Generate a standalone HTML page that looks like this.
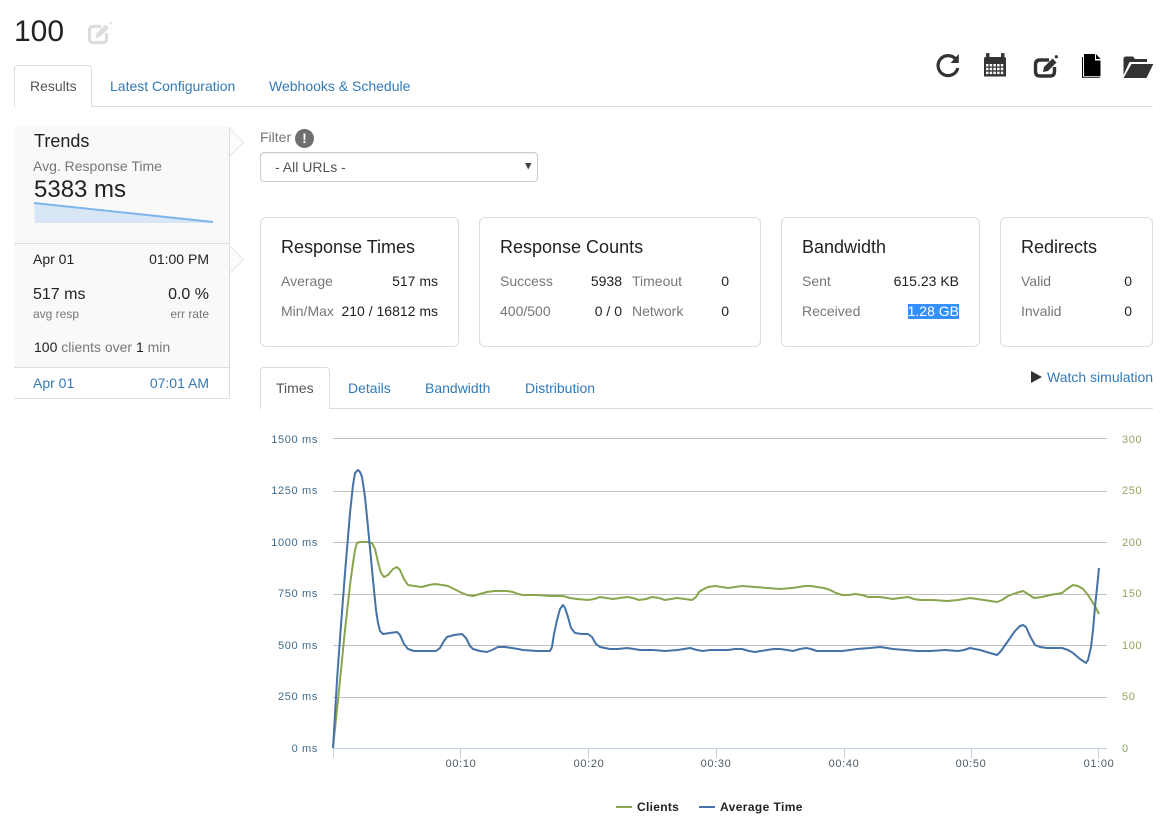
<!DOCTYPE html>
<html><head><meta charset="utf-8"><style>
html,body{margin:0;padding:0;background:#fff;width:1167px;height:836px;overflow:hidden}
body{position:relative;font-family:"Liberation Sans",Arial,sans-serif;font-size:14px;color:#333}
.t{position:absolute;white-space:nowrap;line-height:20px}
.g{color:#777}.a{color:#337ab7}.d{color:#222}
.b{position:absolute;box-sizing:border-box}
.card{position:absolute;box-sizing:border-box;top:217px;height:130px;border:1px solid #ddd;border-radius:6px;background:#fff}
.h{font-size:18px;color:#222;top:237px}
.r1{top:271px}.r2{top:301px}
.l{font-size:11px;text-align:right;width:60px;left:258px;color:#3f6a8a;letter-spacing:.65px}
.rr{font-size:11px;left:1122px;color:#8fa45e;letter-spacing:.65px}
.x{font-size:11px;width:60px;text-align:center;top:754px;color:#4b5a66;letter-spacing:.65px}
</style></head><body>
<div class="t" style="left:14px;top:16px;font-size:30px;line-height:32px;color:#222">100</div>

<div class="b" style="left:14px;top:106px;width:1139px;height:1px;background:#ddd"></div>
<div class="b" style="left:14px;top:65px;width:78px;height:42px;border:1px solid #ddd;border-bottom:0;border-radius:4px 4px 0 0;background:#fff"></div>
<div class="t" style="left:30px;top:76px;color:#555">Results</div>
<div class="t a" style="left:110px;top:76px">Latest Configuration</div>
<div class="t a" style="left:269px;top:76px">Webhooks &amp; Schedule</div>

<svg class="b" style="left:0;top:0" width="1167" height="100" viewBox="0 0 1167 100">
<!-- title edit -->
<path d="M101 26.500H93Q89.500 26.500 89.500 30V39Q89.500 42.500 93 42.500H103Q106.500 42.500 106.500 39V33" fill="none" stroke="#ddd" stroke-width="3.200"/>
<path d="M95.500 38L96.500 33.500L105.500 24.500L109 28L100 37Z" fill="#ddd"/><circle cx="110.500" cy="23" r="1.300" fill="#ddd"/>
<!-- refresh -->
<path d="M956 59.500A10 10 0 1 0 957.800 68" fill="none" stroke="#333" stroke-width="3.200"/>
<path d="M958.800 54V63H950.500Z" fill="#333"/>
<!-- calendar -->
<path d="M986 57H1004Q1006 57 1006 59V76.500H984V59Q984 57 986 57Z" fill="#333"/>
<rect x="986" y="53" width="3.500" height="5" rx="1" fill="#333"/><rect x="1001" y="53" width="3.500" height="5" rx="1" fill="#333"/>
<path d="M986 64h2.500v2.500h-2.500zM989.700 64h2.500v2.500h-2.500zM993.400 64h2.500v2.500h-2.500zM997.100 64h2.500v2.500h-2.500zM1000.800 64h2.500v2.500h-2.500zM986 67.800h2.500v2.500h-2.500zM989.700 67.800h2.500v2.500h-2.500zM993.400 67.800h2.500v2.500h-2.500zM997.100 67.800h2.500v2.500h-2.500zM1000.800 67.800h2.500v2.500h-2.500zM986 71.600h2.500v2.500h-2.500zM989.700 71.600h2.500v2.500h-2.500zM993.400 71.600h2.500v2.500h-2.500zM997.100 71.600h2.500v2.500h-2.500zM1000.800 71.600h2.500v2.500h-2.500z" fill="#fff"/>
<!-- edit -->
<path d="M1049 60H1040Q1035.500 60 1035.500 64.500V71.500Q1035.500 76 1040 76H1050Q1054.500 76 1054.500 71.500V67" fill="none" stroke="#333" stroke-width="3.400"/>
<path d="M1043 72L1044 67L1052.500 58.500L1056.500 62.500L1048 71Z" fill="#333"/><circle cx="1056.300" cy="56.700" r="1.600" fill="#333"/>
<!-- file -->
<path d="M1084 54H1095V60.500H1100.500V76H1084Z" fill="#000"/><path d="M1096 54L1100.500 59H1096Z" fill="#000"/>
<path d="M1082.500 57V77.300H1100" fill="none" stroke="#000" stroke-width="1"/>
<!-- folder -->
<path d="M1123.500 75V59Q1123.500 56.500 1126 56.500H1133L1135 59H1147V62H1129.500Z" fill="#333"/>
<path d="M1131.500 64H1153.300L1146.500 78H1123.500Z" fill="#333"/>
</svg>

<div class="b" style="left:14px;top:127px;width:216px;height:240px;background:#f9f9f9"></div>
<div class="b" style="left:229px;top:127px;width:1px;height:272px;background:#ddd"></div>
<div class="b" style="left:14px;top:243px;width:216px;height:1px;background:#ddd"></div>
<div class="b" style="left:14px;top:367px;width:216px;height:1px;background:#ddd"></div>
<div class="b" style="left:14px;top:398px;width:216px;height:1px;background:#ddd"></div>
<svg class="b" style="left:230px;top:128px" width="16" height="30"><path d="M0 1L13.500 14.500L0 28" fill="#fcfcfc" stroke="#e6e6e6"/></svg>
<svg class="b" style="left:230px;top:245px" width="16" height="30"><path d="M0 1L13.500 14.500L0 28" fill="#fcfcfc" stroke="#e6e6e6"/></svg>
<div class="t" style="left:34px;top:131px;font-size:18px;color:#222">Trends</div>
<div class="t g" style="left:33px;top:156px">Avg. Response Time</div>
<div class="t" style="left:34px;top:180px;font-size:24px;color:#222">5383 ms</div>
<svg class="b" style="left:30px;top:198px" width="190" height="30"><path d="M4.500 5L183 24V25H4.500Z" fill="#d8e6f6"/><path d="M4 5L183 24" fill="none" stroke="#7cb5ec" stroke-width="2"/></svg>
<div class="t d" style="left:33px;top:249px">Apr 01</div>
<div class="t d" style="right:958px;top:249px">01:00 PM</div>
<div class="t d" style="left:33px;top:285px;font-size:16px">517 ms</div>
<div class="t d" style="right:958px;top:285px;font-size:16px">0.0 %</div>
<div class="t g" style="left:33px;top:304px;font-size:12px">avg resp</div>
<div class="t g" style="right:958px;top:304px;font-size:12px">err rate</div>
<div class="t g" style="left:34px;top:337px"><span class="d">100</span> clients over <span class="d">1</span> min</div>
<div class="t a" style="left:33px;top:373px">Apr 01</div>
<div class="t a" style="right:958px;top:373px">07:01 AM</div>

<div class="t g" style="left:260px;top:127px">Filter</div>
<div class="b" style="left:295px;top:129px;width:19px;height:19px;border-radius:50%;background:#6f6f6f;color:#fff;font-weight:bold;font-size:14px;line-height:19px;text-align:center">!</div>
<div class="b" style="left:260px;top:152px;width:278px;height:30px;border:1px solid #ccc;border-radius:4px;box-shadow:inset 0 1px 1px rgba(0,0,0,.075)"></div>
<div class="t" style="left:275px;top:157px;color:#555">- All URLs -</div>
<svg class="b" style="left:525px;top:163px" width="7" height="7"><path d="M0 0H6.500L3.250 6.500Z" fill="#444"/></svg>

<div class="card" style="left:260px;width:199px"></div>
<div class="card" style="left:479px;width:282px"></div>
<div class="card" style="left:781px;width:199px"></div>
<div class="card" style="left:1000px;width:153px"></div>
<div class="t h" style="left:281px">Response Times</div>
<div class="t g r1" style="left:281px">Average</div><div class="t d r1" style="right:729px">517 ms</div>
<div class="t g r2" style="left:281px">Min/Max</div><div class="t d r2" style="right:729px">210 / 16812 ms</div>
<div class="t h" style="left:500px">Response Counts</div>
<div class="t g r1" style="left:500px">Success</div><div class="t d r1" style="right:545px">5938</div>
<div class="t g r1" style="left:632px">Timeout</div><div class="t d r1" style="right:438px">0</div>
<div class="t g r2" style="left:500px">400/500</div><div class="t d r2" style="right:545px">0 / 0</div>
<div class="t g r2" style="left:632px">Network</div><div class="t d r2" style="right:438px">0</div>
<div class="t h" style="left:802px">Bandwidth</div>
<div class="t g r1" style="left:802px">Sent</div><div class="t d r1" style="right:208px">615.23 KB</div>
<div class="t g r2" style="left:802px">Received</div><div class="t r2" style="right:208px;top:304px;line-height:15px;background:#3390ff;color:#fff">1.28 GB</div>
<div class="t h" style="left:1021px">Redirects</div>
<div class="t g r1" style="left:1021px">Valid</div><div class="t d r1" style="right:35px">0</div>
<div class="t g r2" style="left:1021px">Invalid</div><div class="t d r2" style="right:35px">0</div>

<div class="b" style="left:260px;top:408px;width:893px;height:1px;background:#ddd"></div>
<div class="b" style="left:260px;top:367px;width:70px;height:42px;border:1px solid #ddd;border-bottom:0;border-radius:4px 4px 0 0;background:#fff"></div>
<div class="t" style="left:276px;top:378px;color:#555">Times</div>
<div class="t a" style="left:348px;top:378px">Details</div>
<div class="t a" style="left:425px;top:378px">Bandwidth</div>
<div class="t a" style="left:525px;top:378px">Distribution</div>
<svg class="b" style="left:1031px;top:371px" width="12" height="12"><path d="M0 0L11 6L0 12Z" fill="#333"/></svg>
<div class="t a" style="left:1047px;top:367px">Watch simulation</div>

<svg class="b" style="left:0;top:0" width="1167" height="836">
<g stroke="#c0c0c0" stroke-width="1"><path d="M333 438.500H1107M333 491.500H1107M333 542.500H1107M333 594.500H1107M333 645.500H1107M333 697.500H1107"/></g>
<path d="M333 748.500H1107M333.500 748V758M460.500 748V758M588.500 748V758M716.500 748V758M844.500 748V758M971.500 748V758M1098.500 748V758" stroke="#c0d0e0" fill="none"/>
<polyline fill="none" stroke="#89a54e" stroke-width="2" stroke-linejoin="round" points="333,748 339,690 345,630 350,585 353,563 355,550 357,543 360,542 368,542 372,543 375,549 378,562 381,573 384,577 388,575 393,569 397,567 400,570 404,579 408,585 414,586 422,587 429,585 435,584 442,585 448,586 454,589 460,592 467,595 473,596 480,594 487,592 494,591 500,591 507,591 513,592 518,594 523,595 537,595 550,596 563,596 570,598 577,599 588,600 594,599 600,597 606,598 613,599 620,598 627,597 633,598 639,600 646,599 652,597 659,598 665,600 671,599 677,598 685,599 692,600 696,597 699,592 702,590 708,587 715,586 722,587 728,588 735,587 742,586 755,587 767,588 780,589 792,588 799,587 805,586 811,586 817,587 824,588 830,590 836,593 842,595 849,595 855,594 862,595 868,597 880,597 887,598 893,599 900,598 908,597 914,599 920,600 933,600 947,601 958,600 970,598 984,600 997,602 1002,600 1008,596 1016,593 1023,591 1028,594 1034,598 1042,597 1050,595 1062,593 1067,589 1073,585 1078,586 1083,589 1088,595 1093,603 1096,608 1099,614"/>
<polyline fill="none" stroke="#4572a7" stroke-width="2" stroke-linejoin="round" points="333,748 337,680 341,625 345,573 350,513 353,485 355,473 358,470 360,472 362,477 365,497 367,517 370,548 373,580 376,610 378,623 380,631 383,634 390,633 397,632 400,635 404,644 408,649 414,651 420,651 436,651 440,648 444,641 447,637 454,635 462,634 466,638 470,646 473,649 480,651 487,652 492,650 498,647 505,647 512,648 518,649 523,650 537,651 550,651 552,647 554,634 557,620 560,609 563,605 565,608 568,617 571,628 575,633 582,634 588,634 592,637 596,644 600,647 605,648 610,649 618,649 627,648 634,649 640,650 653,650 665,651 678,650 690,648 697,650 703,651 710,650 717,650 728,650 735,649 742,649 749,651 755,652 761,651 767,650 774,649 780,649 787,650 793,651 800,649 806,648 811,649 817,651 830,651 842,651 850,650 857,649 870,648 880,647 887,648 893,649 905,650 917,651 930,651 945,650 958,651 964,650 970,648 980,650 990,653 997,655 1001,651 1008,641 1015,631 1020,626 1023,625 1026,627 1030,636 1035,645 1040,647 1047,648 1062,648 1068,650 1073,653 1080,659 1086,663 1088,660 1091,647 1093,630 1095,607 1097,588 1099,568"/>
</svg>

<div class="t l" style="top:430px">1500 ms</div>
<div class="t l" style="top:481px">1250 ms</div>
<div class="t l" style="top:533px">1000 ms</div>
<div class="t l" style="top:584px">750 ms</div>
<div class="t l" style="top:636px">500 ms</div>
<div class="t l" style="top:687px">250 ms</div>
<div class="t l" style="top:739px">0 ms</div>
<div class="t rr" style="top:430px">300</div>
<div class="t rr" style="top:481px">250</div>
<div class="t rr" style="top:533px">200</div>
<div class="t rr" style="top:584px">150</div>
<div class="t rr" style="top:636px">100</div>
<div class="t rr" style="top:687px">50</div>
<div class="t rr" style="top:739px">0</div>
<div class="t x" style="left:431px">00:10</div>
<div class="t x" style="left:559px">00:20</div>
<div class="t x" style="left:686px">00:30</div>
<div class="t x" style="left:814px">00:40</div>
<div class="t x" style="left:941px">00:50</div>
<div class="t x" style="left:1069px">01:00</div>

<div class="b" style="left:616px;top:806px;width:16px;height:2px;background:#89a54e"></div>
<div class="t" style="left:637px;top:797px;font-size:12px;font-weight:bold;color:#222;letter-spacing:.3px">Clients</div>
<div class="b" style="left:699px;top:806px;width:16px;height:2px;background:#4572a7"></div>
<div class="t" style="left:720px;top:797px;font-size:12px;font-weight:bold;color:#222;letter-spacing:.4px">Average Time</div>
</body></html>
